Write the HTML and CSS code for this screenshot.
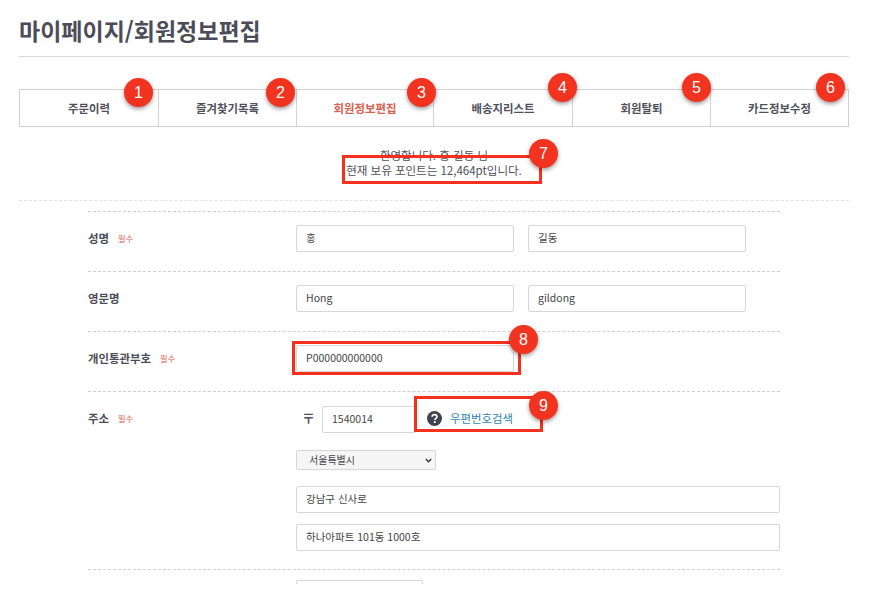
FILE: index.html
```html
<!DOCTYPE html>
<html lang="ko">
<head>
<meta charset="utf-8">
<title>마이페이지/회원정보편집</title>
<link rel="stylesheet" href="styles.css">
</head>
<body>
<div class="page">
  <h1 class="title">마이페이지/회원정보편집</h1>
  <nav class="tabs">
    <a class="tab">주문이력</a>
    <a class="tab">즐겨찾기목록</a>
    <a class="tab tab-active">회원정보편집</a>
    <a class="tab">배송지리스트</a>
    <a class="tab">회원탈퇴</a>
    <a class="tab">카드정보수정</a>
  </nav>
  <div class="notice">
    <p>환영합니다. 홍 길동 님</p>
    <p>현재 보유 포인트는 12,464pt입니다.</p>
  </div>
  <form class="form">
    <div class="row">
      <div class="label"><b>성명</b><span class="req">필수</span></div>
      <div class="fields">
        <input class="input half" value="홍">
        <input class="input half" value="길동">
      </div>
    </div>
    <div class="row">
      <div class="label"><b>영문명</b></div>
      <div class="fields">
        <input class="input half" value="Hong">
        <input class="input half" value="gildong">
      </div>
    </div>
    <div class="row">
      <div class="label"><b>개인통관부호</b><span class="req">필수</span></div>
      <div class="fields">
        <input class="input half" value="P000000000000">
      </div>
    </div>
    <div class="row row-address">
      <div class="label"><b>주소</b><span class="req">필수</span></div>
      <div class="stack">
        <div class="zip">
          <span class="zip-mark">〒</span>
          <input class="input zip-input" value="1540014">
          <a class="zip-link">
            <svg class="help" viewBox="0 0 16 16" aria-hidden="true"><circle cx="8" cy="8" r="8" fill="#41414f"/><path d="M5.4 6.2C5.5 4.7 6.6 3.9 8 3.9c1.5 0 2.6.9 2.6 2.2 0 1-.6 1.5-1.3 2-.6.4-.9.7-.9 1.4" fill="none" stroke="#fff" stroke-width="1.8"/><rect x="7.3" y="10.7" width="2" height="2" fill="#fff"/></svg>
            <span>우편번호검색</span>
          </a>
        </div>
        <div class="select-wrap">
          <select class="select"><option>서울특별시</option></select>
          <svg class="chevron" viewBox="0 0 7 5" aria-hidden="true"><path d="M.8 1l2.7 2.7L6.200 1" fill="none" stroke="#333" stroke-width="1.400"/></svg>
        </div>
        <input class="input full addr1" value="강남구 신사로">
        <input class="input full addr2" value="하나아파트 101동 1000호">
      </div>
    </div>
    <div class="row row-last">
      <div class="label"></div>
      <div class="fields"><input class="input cut"></div>
    </div>
  </form>
</div>

<div class="box box7"></div>
<div class="box box8"></div>
<div class="box box9"></div>
<span class="badge b1">1</span>
<span class="badge b2">2</span>
<span class="badge b3">3</span>
<span class="badge b4">4</span>
<span class="badge b5">5</span>
<span class="badge b6">6</span>
<span class="badge b7">7</span>
<span class="badge b8">8</span>
<span class="badge b9">9</span>
</body>
</html>
```
FILE: styles.css
```css
* { box-sizing: border-box; }
html, body { margin: 0; height: 595px; overflow: hidden; background: #fff; }
body {
  position: relative;
  font-family: "Noto Sans CJK KR", "Noto Sans", sans-serif;
  color: #55555f;
}
.page {
  width: 830px;
  height: 584px;
  margin-left: 19px;
  overflow: hidden;
}
.title {
  margin: 0;
  height: 57px;
  padding-top: 14px;
  font-size: 23px;
  line-height: 33px;
  font-weight: 700;
  color: #4c4c58;
  border-bottom: 1px solid #d8d8d8;
}
.tabs {
  display: grid;
  grid-template-columns: 138px 138px 137px 139px 138px 1fr;
  margin-top: 32px;
  height: 38px;
  border: 1px solid #cfcfcf;
}
.tab {
  display: flex;
  align-items: center;
  justify-content: center;
  padding-bottom: 1px;
  font-size: 11.4px;
  font-weight: 700;
  color: #50505a;
  border-left: 1px solid #d4d4d4;
}
.tab:first-child { border-left: 0; }
.tab-active { color: #d9604f; }
.notice {
  height: 74px;
  padding-top: 21px;
  text-align: center;
  font-size: 11.5px;
  line-height: 15px;
  color: #50505a;
  border-bottom: 1px dashed #e2e2e2;
}
.notice p { margin: 0; }
.form {
  width: 692px;
  margin: 10px 0 0 69px;
}
.row {
  display: flex;
  height: 60px;
  align-items: flex-start;
  padding-top: 13px;
  border-top: 1px dashed #cfcfcf;
}
.row-address {
  height: 178px;
  padding-top: 14px;
}
.row-last { padding-top: 10px; }
.label {
  flex: 0 0 208px;
  display: flex;
  align-items: center;
  gap: 9px;
  height: 25px;
  font-size: 11.4px;
  color: #4c4c58;
}
.label b { font-weight: 700; }
.row-address .label { height: 23px; }
.req {
  font-size: 8.3px;
  color: #d9604f;
}
.fields {
  display: flex;
  gap: 14px;
}
.stack {
  flex: 1;
  display: flex;
  flex-direction: column;
  align-items: flex-start;
}
.input {
  height: 27px;
  padding: 0 9px 2px;
  font: 10.5px "Noto Sans CJK KR", "Noto Sans", sans-serif;
  color: #444;
  background: #fff;
  border: 1px solid #d6d6d6;
  border-radius: 2px;
  outline: 0;
}
.half { width: 218px; }
.full { width: 484px; }
.addr1 { margin-top: 16px; }
.addr2 { margin-top: 11px; }
.cut { width: 127px; }
.zip {
  display: flex;
  align-items: center;
  height: 27px;
  padding-left: 6px;
}
.zip-mark {
  width: 20px;
  font-size: 13px;
  font-weight: 700;
  line-height: 1;
  color: #50505a;
  position: relative;
  top: -2px;
}
.zip-input { width: 94px; }
.zip-link {
  display: flex;
  align-items: center;
  gap: 8px;
  margin-left: 11px;
  font-size: 11.4px;
  color: #2f86b4;
}
.zip-link span { position: relative; top: -2px; }
.help { width: 15px; height: 15px; position: relative; top: -1px; }
.select-wrap {
  position: relative;
  height: 20px;
  margin-top: 17px;
}
.select {
  appearance: none;
  display: block;
  width: 140px;
  height: 20px;
  padding: 0 0 1px 12px;
  font: 10px "Noto Sans CJK KR", "Noto Sans", sans-serif;
  color: #444;
  background: #f5f5f5;
  border: 1px solid #d6d6d6;
  border-radius: 2px;
}
.chevron {
  position: absolute;
  right: 4px;
  top: 8px;
  width: 7px;
  height: 5px;
}
.box {
  position: absolute;
  border: 3px solid #f4311f;
}
.box7 { left: 342px; top: 155px; width: 200px; height: 29px; }
.box8 { left: 292px; top: 341px; width: 229px; height: 34px; }
.box9 { left: 414px; top: 396px; width: 129px; height: 36px; }
.badge {
  position: absolute;
  width: 29px;
  height: 29px;
  display: flex;
  align-items: center;
  justify-content: center;
  border-radius: 50%;
  background: #f2331f;
  color: #fff;
  font: 16px/1 "Liberation Sans", sans-serif;
  box-shadow: 0 2px 4px rgba(0, 0, 0, .4);
}
.b1 { left: 124px; top: 78px; }
.b2 { left: 266px; top: 78px; }
.b3 { left: 407px; top: 78px; }
.b4 { left: 548px; top: 73px; }
.b5 { left: 682px; top: 73px; }
.b6 { left: 816px; top: 73px; }
.b7 { left: 529px; top: 139px; }
.b8 { left: 509px; top: 325px; }
.b9 { left: 529px; top: 391px; }
```
